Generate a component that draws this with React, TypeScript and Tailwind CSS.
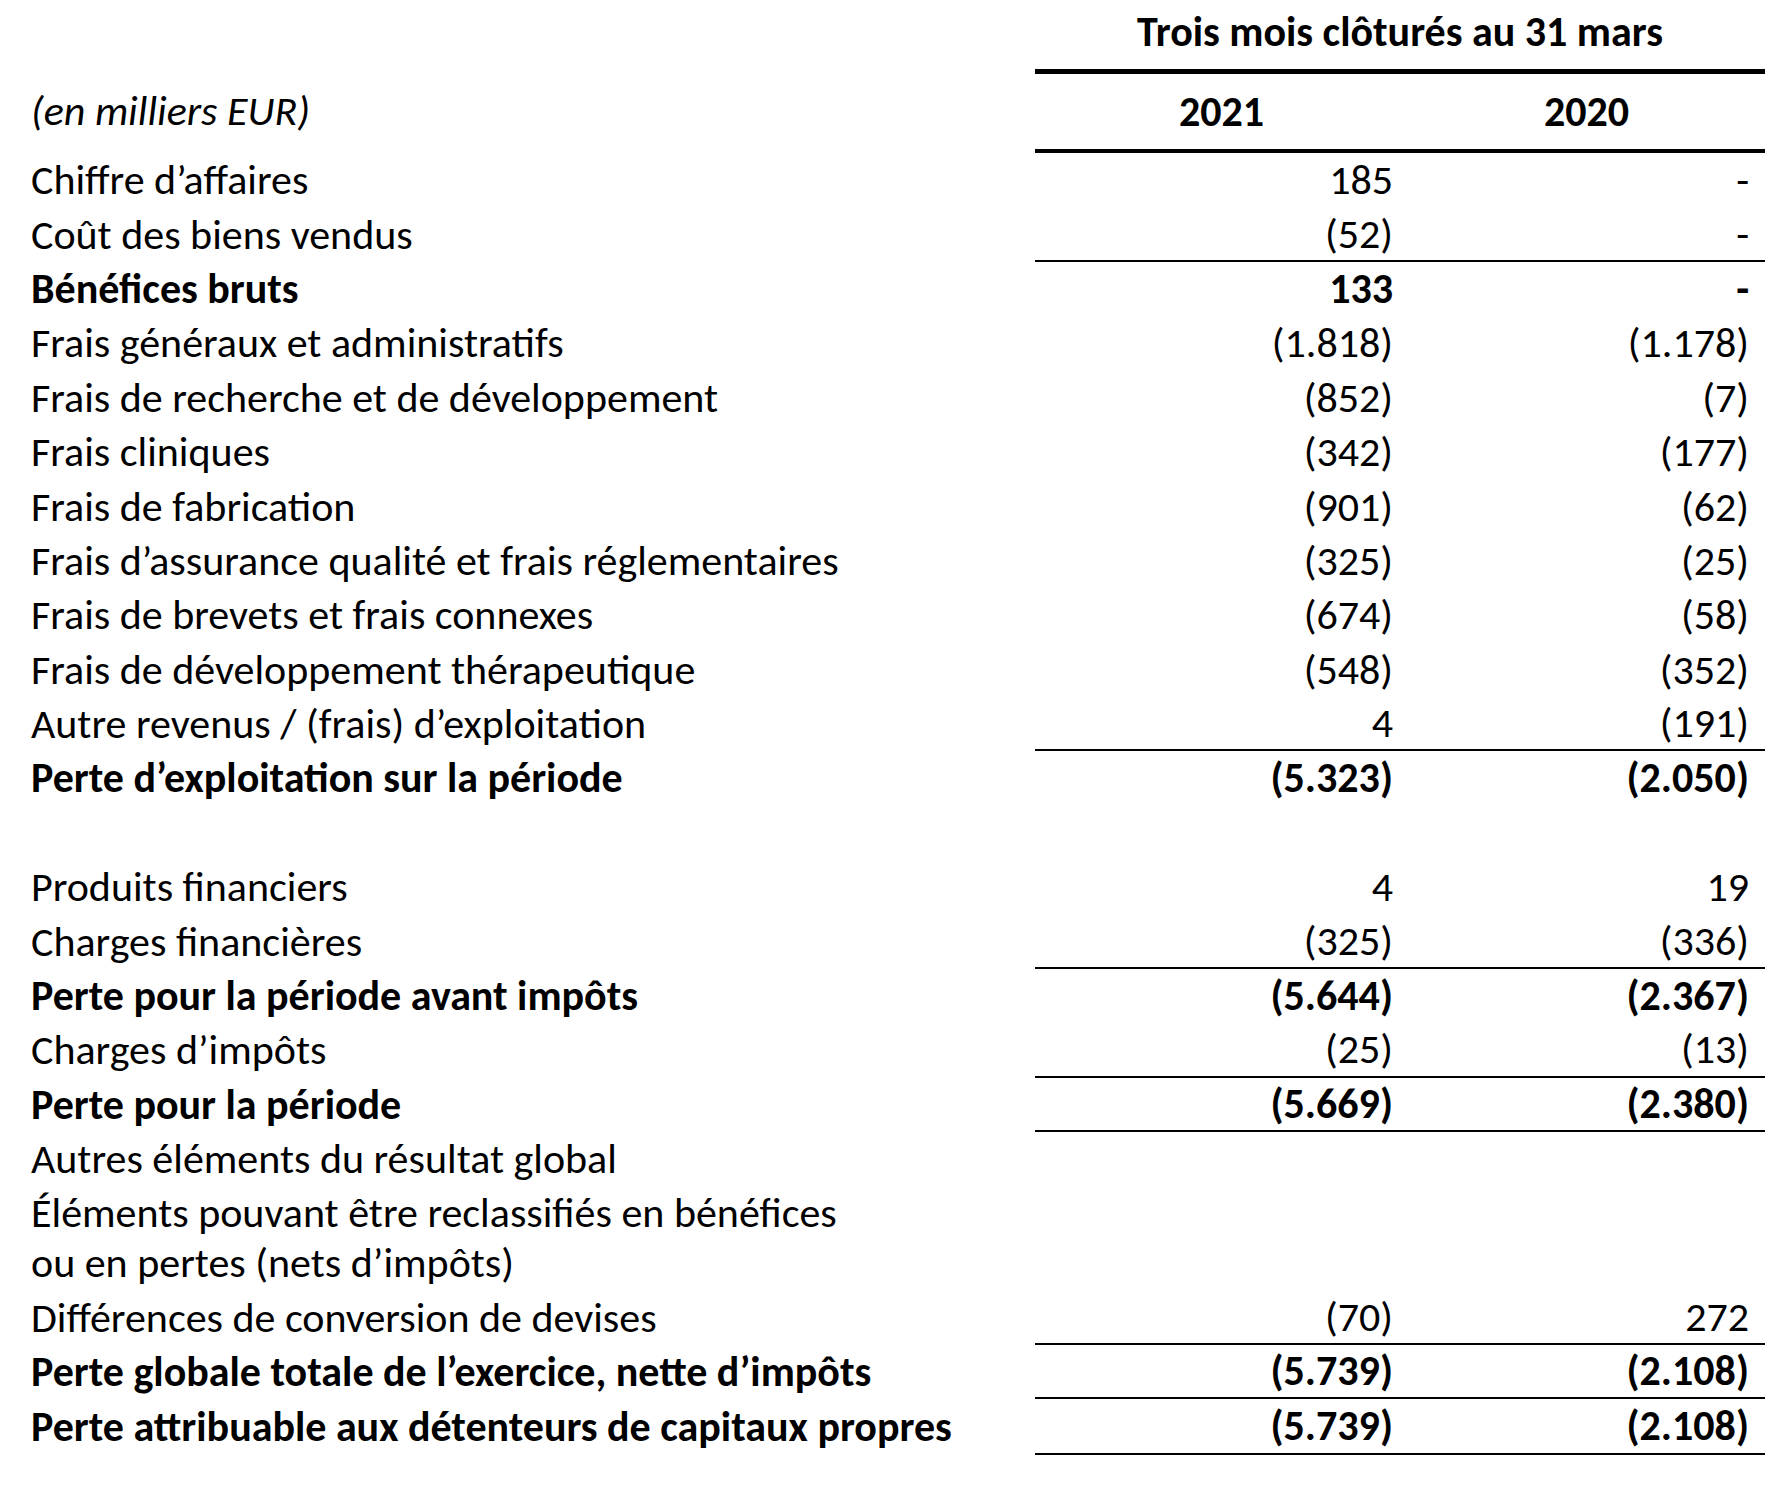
import React from "react";

type Row = {
  label: string;
  a?: string;
  b?: string;
  bold?: boolean;
  line?: boolean;
  tall?: boolean;
  label2?: string;
};

const rows: Row[] = [
  { label: "Chiffre d’affaires", a: "185", b: "-" },
  { label: "Coût des biens vendus", a: "(52)", b: "-", line: true },
  { label: "Bénéfices bruts", a: "133", b: "-", bold: true },
  { label: "Frais généraux et administratifs", a: "(1.818)", b: "(1.178)" },
  { label: "Frais de recherche et de développement", a: "(852)", b: "(7)" },
  { label: "Frais cliniques", a: "(342)", b: "(177)" },
  { label: "Frais de fabrication", a: "(901)", b: "(62)" },
  { label: "Frais d’assurance qualité et frais réglementaires", a: "(325)", b: "(25)" },
  { label: "Frais de brevets et frais connexes", a: "(674)", b: "(58)" },
  { label: "Frais de développement thérapeutique", a: "(548)", b: "(352)" },
  { label: "Autre revenus / (frais) d’exploitation", a: "4", b: "(191)", line: true },
  { label: "Perte d’exploitation sur la période", a: "(5.323)", b: "(2.050)", bold: true },
  { label: "" },
  { label: "Produits financiers", a: "4", b: "19" },
  { label: "Charges financières", a: "(325)", b: "(336)", line: true },
  { label: "Perte pour la période avant impôts", a: "(5.644)", b: "(2.367)", bold: true },
  { label: "Charges d’impôts", a: "(25)", b: "(13)", line: true },
  { label: "Perte pour la période", a: "(5.669)", b: "(2.380)", bold: true, line: true },
  { label: "Autres éléments du résultat global" },
  { label: "Éléments pouvant être reclassifiés en bénéfices", label2: "ou en pertes (nets d’impôts)", tall: true },
  { label: "Différences de conversion de devises", a: "(70)", b: "272", line: true },
  { label: "Perte globale totale de l’exercice, nette d’impôts", a: "(5.739)", b: "(2.108)", bold: true, line: true },
  { label: "Perte attribuable aux détenteurs de capitaux propres", a: "(5.739)", b: "(2.108)", bold: true, line: true },
];

function Cell({ v, line, bold, pad }: { v?: string; line?: boolean; bold?: boolean; pad: string }) {
  return (
    <div
      className={`flex items-center justify-end ${pad} ${line ? "border-b-2 border-black" : ""} ${bold ? "font-bold" : ""}`}
    >
      {v}
    </div>
  );
}

export default function App() {
  return (
    <div
      className="w-[1782px] h-[1488px] bg-white text-black text-[42px] leading-[50px]"
      style={{ fontFamily: "Carlito, Lato, sans-serif" }}
    >
      <div className="grid grid-cols-[1035px_373px_357px]">
        {/* header */}
        <div className="h-[69px]" />
        <div className="col-span-2 h-[69px] flex items-center justify-center font-bold pb-[6px]">
          Trois mois clôturés au 31 mars
        </div>
        <div className="h-[84px] flex items-center pl-[31px] italic">(en milliers EUR)</div>
        <div className="h-[84px] flex items-center justify-center font-bold border-t-[5px] border-b-[4px] border-black">
          2021
        </div>
        <div className="h-[84px] flex items-center justify-center font-bold border-t-[5px] border-b-[4px] border-black">
          2020
        </div>

        {rows.map((r, i) => (
          <React.Fragment key={i}>
            <div
              className={`pl-[31px] flex flex-col whitespace-nowrap ${
                r.tall
                  ? "h-[104px] justify-start pt-[2px]"
                  : i === rows.length - 1
                  ? "h-[56px] justify-center"
                  : "h-[54.4px] justify-center"
              } ${r.bold ? "font-bold" : ""}`}
            >
              <span>{r.label}</span>
              {r.label2 && <span>{r.label2}</span>}
            </div>
            <Cell v={r.a} line={r.line} bold={r.bold} pad="pr-[15px]" />
            <Cell v={r.b} line={r.line} bold={r.bold} pad="pr-[16px]" />
          </React.Fragment>
        ))}
      </div>
    </div>
  );
}
